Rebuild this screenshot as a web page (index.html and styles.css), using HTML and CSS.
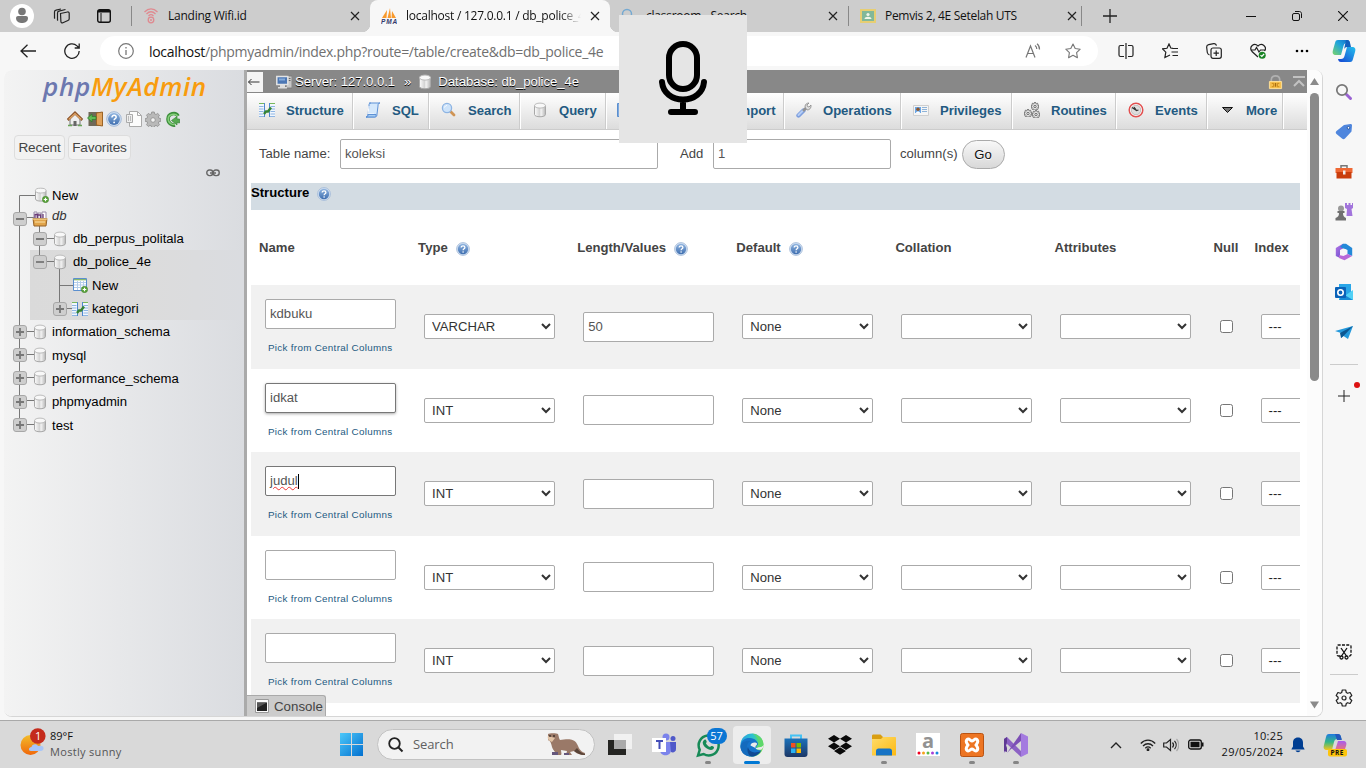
FILE: index.html
```html
<!DOCTYPE html>
<html lang="en">
<head>
<meta charset="utf-8">
<title>localhost / 127.0.0.1 / db_police_4e | phpMyAdmin</title>
<link rel="stylesheet" href="styles.css">
</head>
<body>
<svg class="sprite" aria-hidden="true">
  <defs>
    <linearGradient id="g-db" x1="0" x2="1" y1="0" y2="0"><stop offset="0" stop-color="#fdfdfd"/><stop offset=".45" stop-color="#d4d4d4"/><stop offset=".6" stop-color="#f3f3f3"/><stop offset="1" stop-color="#b5b5b5"/></linearGradient>
    <linearGradient id="g-help" x1="0" x2="0" y1="0" y2="1"><stop offset="0" stop-color="#8fb4e0"/><stop offset="1" stop-color="#3f6fb0"/></linearGradient>
    <linearGradient id="g-copilot" x1="1" x2="0" y1="0" y2="1"><stop offset="0" stop-color="#1468c8"/><stop offset=".45" stop-color="#1fa5dc"/><stop offset="1" stop-color="#7bd46a"/></linearGradient>
    <linearGradient id="g-copilot2" x1="1" x2="0" y1="0" y2="1"><stop offset="0" stop-color="#25c0ee"/><stop offset="1" stop-color="#1443d2"/></linearGradient>
    <linearGradient id="g-win" x1="0" x2="1" y1="0" y2="1"><stop offset="0" stop-color="#4cc8fa"/><stop offset="1" stop-color="#0370cf"/></linearGradient>
    <linearGradient id="g-sun" x1="0" x2="0" y1="0" y2="1"><stop offset="0" stop-color="#f3bd2b"/><stop offset="1" stop-color="#f0670a"/></linearGradient>
    <linearGradient id="g-edge" x1="0" x2="1" y1="0" y2=".4"><stop offset="0" stop-color="#2a9ae0"/><stop offset=".5" stop-color="#2cc3cf"/><stop offset="1" stop-color="#68dd55"/></linearGradient>
    <linearGradient id="g-folder" x1="0" x2="1" y1="0" y2="1"><stop offset="0" stop-color="#ffdc69"/><stop offset="1" stop-color="#fcb913"/></linearGradient>
    <linearGradient id="g-store" x1="0" x2="0" y1="0" y2="1"><stop offset="0" stop-color="#1b72bb"/><stop offset="1" stop-color="#1c3766"/></linearGradient>
    <linearGradient id="g-pre" x1="0" x2="0" y1="0" y2="1"><stop offset="0" stop-color="#1f7be0"/><stop offset=".5" stop-color="#33b787"/><stop offset="1" stop-color="#f4c51c"/></linearGradient>
    <linearGradient id="g-pre2" x1="0" x2="0" y1="0" y2="1"><stop offset="0" stop-color="#a85df0"/><stop offset="1" stop-color="#f77a5c"/></linearGradient>
    <linearGradient id="g-m365" x1="0" x2="1" y1="0" y2="1"><stop offset="0" stop-color="#b574e6"/><stop offset="1" stop-color="#5b4bc9"/></linearGradient>
  </defs>
  <symbol id="i-x" viewBox="0 0 10 10"><path d="M1 1l8 8M9 1L1 9" fill="none" stroke="#222" stroke-width="1.2"/></symbol>
  <symbol id="i-db" viewBox="0 0 16 16"><path d="M2.500 3.500v9c0 3 11 3 11 0v-9z" fill="url(#g-db)" stroke="#a8a8a8"/><ellipse cx="8" cy="3.600" rx="5.500" ry="2.500" fill="#f8f8f8" stroke="#bcbcbc"/></symbol>
  <symbol id="i-plus-badge" viewBox="0 0 8 8"><circle cx="4" cy="4" r="3.600" fill="#5ba53c" stroke="#3f7a28" stroke-width=".6"/><path d="M4 2v4M2 4h4" stroke="#fff" stroke-width="1.300"/></symbol>
  <symbol id="i-dbnew" viewBox="0 0 16 16"><path d="M2.500 3.500v8.500c0 2.800 10.500 2.800 10.500 0V3.500z" fill="url(#g-db)" stroke="#a8a8a8"/><ellipse cx="7.700" cy="3.600" rx="5.300" ry="2.400" fill="#f8f8f8" stroke="#bcbcbc"/><use href="#i-plus-badge" x="9" y="9" width="7" height="7"/></symbol>
  <symbol id="i-help" viewBox="0 0 14 14"><circle cx="7" cy="7" r="6.400" fill="#d3e1f2" stroke="#9db5d5" stroke-width=".8"/><circle cx="7" cy="7" r="5.200" fill="url(#g-help)"/><path d="M5.200 5.600c0-2.500 3.700-2.200 3.700-.2C8.900 6.800 7.100 6.600 7.100 8.200" fill="none" stroke="#fff" stroke-width="1.300"/><circle cx="7.100" cy="10" r=".8" fill="#fff"/></symbol>
  <symbol id="i-struct" viewBox="0 0 16 16"><path d="M0 1h5.500v14H0zM10.500 1H16v14h-5.500z" fill="#f2f7fd"/><path d="M5.500 1v14M10.500 1v14" stroke="#4f88cf" fill="none"/><path d="M0 1.500h5M11 1.500h5" stroke="#78b85c"/><path d="M0 4.500h4.500M0 7h4.500M0 9.500h4.500M0 12h4.500M0 14.500h5M11.500 4.500H16M11.500 7H16M11.500 9.500H16M11.500 12H16M11 14.500h5" stroke="#8eb5e3"/><path d="M5 12l2-2.500h2L12 5.500" fill="none" stroke="#358334" stroke-width="2.400"/></symbol>
  <symbol id="i-tblnew" viewBox="0 0 16 16"><path d="M1.500 1.500h13v12h-13z" fill="#fff" stroke="#5b8fce"/><path d="M2 2.700h12" stroke="#79b05f" stroke-width="1.200"/><path d="M5.500 4v9M8.500 4v9M11.500 4v9M2 5.500h12M2 8h12M2 10.500h12" stroke="#b3cdeb"/><use href="#i-plus-badge" x="9" y="9" width="7" height="7"/></symbol>
  <symbol id="i-sql" viewBox="0 0 16 16"><path d="M4 1h11c-2 0-2 1.500-2 3l-1 8c0 2-.5 3-2 3H1c1.500 0 2-1 2-3l1-8c0-2 0-3 2-3" fill="#d4e8fc" stroke="#5d91d6"/><path d="M4 4l-1 8h6" fill="none" stroke="#fff"/><path d="M1 15c2 0 2-1.500 2-2.500h8c0 1.500 0 2.500-1.500 2.500z" fill="#a6ccf2" stroke="#5d91d6"/></symbol>
  <symbol id="i-search" viewBox="0 0 16 16"><path d="M9.500 9.500l3.500 3.500" stroke="#cf9455" stroke-width="2.800" stroke-linecap="round"/><circle cx="6" cy="6" r="4.600" fill="#cde3fa" stroke="#8db4e3" stroke-width="1.300"/><path d="M3.500 5.500c.4-1.300 1.500-2 2.500-2" stroke="#fff" fill="none"/></symbol>
  <symbol id="i-wrench" viewBox="0 0 16 16"><path d="M2.500 13.500l5-5" stroke="#7d9ede" stroke-width="4.400" stroke-linecap="round"/><path d="M2.500 13l4.500-4.500" stroke="#b4cdf5" stroke-width="2" stroke-linecap="round"/><path d="M7 9l3-3" stroke="#929292" stroke-width="2.500"/><path d="M9 5c0-3 2-4 4-4l-2 2 .5 1.500L13 5l2-2c.5 3-1.500 5-4 5z" fill="#dedede" stroke="#888" stroke-width=".8"/></symbol>
  <symbol id="i-card" viewBox="0 0 16 16"><path d="M.5 3.500h15v10H.5z" fill="#f5f5f5" stroke="#cfcfcf"/><path d="M2 5h6v6H2z" fill="#6ba6e5"/><circle cx="5" cy="7.300" r="1.700" fill="#8e572d"/><path d="M3 11c0-2 4-2 4 0z" fill="#fff"/><path d="M9 5.500h5M9 7.500h5M9 9.500h5" stroke="#8eb3d8"/></symbol>
  <symbol id="i-gear-s" viewBox="0 0 16 16"><path d="M6.700 1h2.600l.4 2 1.300.5 1.700-1.100 1.800 1.800-1.100 1.700.5 1.300 2 .5v2.600l-2 .4-.5 1.300 1.100 1.700-1.800 1.800-1.700-1.100-1.300.5-.4 2H6.700l-.4-2-1.300-.5-1.700 1.100-1.800-1.800L2.600 12l-.5-1.300-2-.4V7.700l2-.5.5-1.300-1.100-1.700 1.800-1.800L5 3.500 6.300 3z"/><circle cx="8" cy="9" r="2.300" fill="#f3f3f3"/></symbol>
  <symbol id="i-routines" viewBox="0 0 16 16"><g fill="#e2e2e2" stroke="#4c4c4c" stroke-width="1.500"><use href="#i-gear-s" x="7" y="0" width="8" height="8"/><use href="#i-gear-s" x="0" y="7" width="8" height="8"/><use href="#i-gear-s" x="8" y="8" width="8" height="8"/></g></symbol>
  <symbol id="i-events" viewBox="0 0 16 16"><circle cx="8" cy="8" r="6.800" fill="#fff" stroke="#e25050" stroke-width="1.500"/><circle cx="8" cy="8" r="4.800" fill="#ddd" stroke="#aaa" stroke-width=".7"/><path d="M4 5.500l4.500 3M6 5l2.500 3.500 2-.5" fill="none" stroke="#333" stroke-width="1.200"/></symbol>
  <symbol id="i-lock" viewBox="0 0 16 16"><path d="M3.500 8V5.500c0-5.500 9-5.500 9 0V8" fill="none" stroke="#b0b0b0" stroke-width="1.800"/><path d="M1.500 7.500h13v7.500h-13z" fill="#f6bf4c" stroke="#ffe19a"/><path d="M4 9.500h2v3.500H4M12 9.500h-2v3.500h2" fill="none" stroke="#c98a1a"/><path d="M8 9v4" stroke="#a86e10" stroke-width="1.500"/></symbol>
  <symbol id="i-server" viewBox="0 0 16 16"><path d="M11 2h5v12h-6z" fill="#c6c6c6" stroke="#777" stroke-width=".8"/><path d="M12.500 4.500h2M12.500 6.500h2" stroke="#666"/><path d="M.8 2.500h11v8h-11z" fill="#4c77b4" stroke="#e3e3e3" stroke-width="1.500"/><path d="M3 4.500h6v2H3z" fill="#85abd9"/><path d="M4 11h5v2H4zM2 13h9v1.500H2z" fill="#ddd"/></symbol>
  <symbol id="i-home" viewBox="0 0 16 16"><path d="M3 8v6h10V8L8 3z" fill="#eee" stroke="#777"/><path d="M.7 9L8 2l7.300 7" fill="none" stroke="#8b532a" stroke-width="2.800"/><path d="M1.700 8.500L8 2.600l6.300 5.900" fill="none" stroke="#e0a566" stroke-width="1.400"/><path d="M6.500 10h3v5h-3z" fill="#666"/><path d="M1 14.500h4M11 14.500h4" stroke="#6aa457" stroke-width="1.600"/></symbol>
  <symbol id="i-door" viewBox="0 0 16 16"><path d="M1.500 1h13v14h-13z" fill="#6f6858"/><path d="M9.500 2l6-1v14l-6-1z" fill="#e0a25a" stroke="#9c6426"/><path d="M9 8.500H5V11L.5 7 5 3v2.500h4z" fill="#5fba55" stroke="#317f2f" stroke-width=".8"/></symbol>
  <symbol id="i-doc" viewBox="0 0 16 16"><path d="M3.500.5h8l4 4v11h-12z" fill="#fcfcfc" stroke="#aaa"/><path d="M11.500.5v4h4" fill="none" stroke="#aaa"/><path d="M.5 3.500h6v8h-6z" fill="#eee" stroke="#aaa"/><path d="M2.500 5v5M4.500 5v5" stroke="#bbb"/></symbol>
  <symbol id="i-reload" viewBox="0 0 16 16"><path d="M13 5C11 .8 3 2 3 8c0 5 5 6.500 7 6" fill="none" stroke="#3d8f3c" stroke-width="3.600"/><path d="M12.500 5C10.500 2 3.200 2.800 3.200 8c0 4.500 4.500 5.800 6.800 5.500" fill="none" stroke="#86cf7a" stroke-width="1.500"/><path d="M6.500 9.500l5.500-4v2.500h2.500v4l-2.500-.5v2.500z" fill="#55aa50" stroke="#3a8739" stroke-width=".7"/></symbol>
  <symbol id="i-box" viewBox="0 0 16 16"><path d="M2 1h3v7H2zM6 2h3v7H6zM10 1h4v7h-4z" fill="#fff" stroke="#988ba6"/><path d="M3 7V3.500h2.500V7M5.500 4h3v3M11 3v4" fill="none" stroke="#6a3b78" stroke-width="1.300"/><path d="M1 7.500h14l-1 7.500H2z" fill="#e1a44a" stroke="#966328"/><path d="M0 8h16M3 11h10" stroke="#fae1a7"/></symbol>
  <symbol id="i-minus" viewBox="0 0 14 14"><rect x=".5" y=".5" width="13" height="13" rx="2.500" fill="#cecece" stroke="#a7a7a7"/><path d="M3 7h8" stroke="#777" stroke-width="1.800"/></symbol>
  <symbol id="i-plus" viewBox="0 0 14 14"><rect x=".5" y=".5" width="13" height="13" rx="2.500" fill="#cecece" stroke="#a7a7a7"/><path d="M3 7h8M7 3v8" stroke="#777" stroke-width="1.800"/></symbol>
</svg>

<div class="browser">
  <header class="tabs">
    <svg class="profile" viewBox="0 0 24 24"><circle cx="12" cy="12" r="12" fill="#fff"/><circle cx="12" cy="7.500" r="3.800" fill="#777"/><path d="M6 14c0-1.300 1-2 2-2h8c1 0 2 .7 2 2 0 4-3.500 5-6 5s-6-1-6-5z" fill="#777"/></svg>
    <svg class="spaces" viewBox="0 0 18 16" fill="none" stroke="#222" stroke-width="1.200"><path d="M7.500 5.500l7-1.500c1-.2 1.700.3 1.700 1.200v5.500c0 1-.5 1.500-1.300 1.800l-5 2.200c-1 .5-2 0-2-1.200z"/><path d="M5 12.500l-.5-.5V5c0-1 .5-1.600 1.500-1.800L12.500 1.500M2 10.500L1.500 10V4c0-1 .5-1.600 1.500-1.800L8 1"/></svg>
    <svg class="tabmenu" viewBox="0 0 14 14"><rect x=".7" y=".7" width="12.600" height="12.600" rx="2" fill="none" stroke="#111" stroke-width="1.400"/><path d="M1 1h12v2.500H1z" fill="#111"/><path d="M4 4v9" stroke="#111"/></svg>
    <i class="sep"></i>
    <div class="tab tab-wifi">
      <svg class="fav" viewBox="0 0 16 16" fill="none" stroke="#df8a90" stroke-width="1.300"><path d="M1.500 4c4-4 9-4 13 0M3.500 6c3-3 6-3 9 0M5.500 8c2-2 3-2 5 0"/><circle cx="8" cy="12" r="2.800"/><path d="M7 12h2"/></svg>
      <span class="title">Landing Wifi.id</span><svg class="x"><use href="#i-x"/></svg>
    </div>
    <div class="tab tab-active">
      <svg class="fav" viewBox="0 0 16 16"><path d="M1 10L6 2l-.5 8zM6.500 10L9 0l1 10zM10.500 10L11 3l4 7z" fill="#f8992c"/><text x="0" y="15.500" class="pma" textLength="16">PMA</text></svg>
      <span class="title fade">localhost / 127.0.0.1 / db_police_4e</span><svg class="x"><use href="#i-x"/></svg>
    </div>
    <div class="tab tab-class">
      <svg class="fav" viewBox="0 0 16 16"><circle cx="6" cy="6" r="4.500" fill="none" stroke="#74a9d2" stroke-width="1.500"/><path d="M9 9l5 5" stroke="#74a9d2" stroke-width="2"/></svg>
      <span class="title">classroom - Search</span><svg class="x"><use href="#i-x"/></svg>
    </div>
    <i class="sep"></i>
    <div class="tab tab-pemvis">
      <svg class="fav" viewBox="0 0 16 14"><path d="M0 0h16v14H0z" fill="#e7ce72"/><path d="M2 2h12v10H2z" fill="#82b899"/><circle cx="8" cy="5.500" r="1.600" fill="#f2f5e9"/><path d="M4.500 10c0-3 7-3 7 0z" fill="#f2f5e9"/></svg>
      <span class="title">Pemvis 2, 4E Setelah UTS</span><svg class="x"><use href="#i-x"/></svg>
    </div>
    <i class="sep"></i>
    <svg class="newtab" viewBox="0 0 14 14"><path d="M7 0v14M0 7h14" stroke="#222" stroke-width="1.300"/></svg>
    <div class="winctl">
      <svg viewBox="0 0 10 10"><path d="M0 5.500h10" stroke="#111"/></svg>
      <svg viewBox="0 0 10 10" fill="none" stroke="#111"><rect x=".5" y="2.500" width="7" height="7" rx="1.500"/><path d="M3 .5h4.500c1 0 2 1 2 2V7"/></svg>
      <svg viewBox="0 0 10 10"><path d="M0 0l10 10M10 0L0 10" stroke="#111" stroke-width="1.200"/></svg>
    </div>
  </header>

  <div class="toolbar">
    <svg class="back" viewBox="0 0 16 14"><path d="M16 7H1M7.500.7L1 7l6.500 6.300" fill="none" stroke="#222" stroke-width="1.300"/></svg>
    <svg class="refresh" viewBox="0 0 16 16"><path d="M15.200 8A7.200 7.200 0 1 1 13 2.900L15 5M15.200.5V5h-4.500" fill="none" stroke="#222" stroke-width="1.300"/></svg>
    <div class="urlbar">
      <svg class="info" viewBox="0 0 16 16"><circle cx="8" cy="8" r="7.300" fill="none" stroke="#777" stroke-width="1.200"/><path d="M8 7v5M8 4v1.600" stroke="#777" stroke-width="1.300"/></svg>
      <span class="url"><b>localhost</b>/phpmyadmin/index.php?route=/table/create&amp;db=db_police_4e</span>
      <svg class="read" viewBox="0 0 16 16" fill="none" stroke="#777" stroke-width="1.200"><path d="M1 14.500L5.500 3 10 14.500M2.600 10.500h5.800M10 2.500c1.300.8 1.800 2 1.800 3.500M12 .8c2 1.500 2.600 3.500 2.500 5.700"/></svg>
      <svg class="star" viewBox="0 0 16 16" fill="none" stroke="#777" stroke-width="1.100"><path d="M8 1l2.200 4.500 5 .7-3.600 3.500.8 5L8 12.300l-4.400 2.400.8-5L.8 6.200l5-.7z" stroke-linejoin="round"/></svg>
    </div>
    <div class="tools">
      <svg viewBox="0 0 16 16" fill="none" stroke="#222" stroke-width="1.200"><path d="M6 2.500H2.500c-1 0-1.500.5-1.500 1.500v8c0 1 .5 1.500 1.500 1.500H6M10 2.500h3.500c1 0 1.500.5 1.500 1.500v8c0 1-.5 1.500-1.500 1.500H10M8 0v16"/></svg>
      <svg viewBox="0 0 16 16" fill="none" stroke="#222" stroke-width="1.200"><path d="M11 5.300l-2.200-.3L7 1 5 5.300l-4.500.6 3.300 3.300-.9 5.300L8 12M10.500 5.500H16M9.500 9H16M10.500 12.500H16"/></svg>
      <svg viewBox="0 0 16 16" fill="none" stroke="#222" stroke-width="1.200"><rect x="5" y="5" width="10.300" height="10.300" rx="2"/><path d="M10.200 7.500v5.400M7.500 10.200h5.400M3.500 12C2 11.500 1.500 10.500 1.300 9.500L.7 4.500C.5 3 1.200 2 2.700 1.700l5-1c1.300-.2 2.500.5 2.800 2"/></svg>
      <svg viewBox="0 0 16 16" fill="none" stroke="#222" stroke-width="1.200"><path d="M8 14L2 8.500C-1.500 4 4-1 8 3c4-4 9.500 1 6.500 5M1.500 7H5l1.500-2.500L9 9l1.500-2h4"/><circle cx="12.200" cy="12.200" r="3.500" fill="#188424" stroke="none"/><path d="M10.500 12.200l1.300 1.300 2.300-2.500" stroke="#fff"/></svg>
      <svg viewBox="0 0 16 16"><circle cx="3" cy="8" r="1.300"/><circle cx="8" cy="8" r="1.300"/><circle cx="13" cy="8" r="1.300"/></svg>
    </div>
    <svg class="copilot" viewBox="0 0 24 24"><path d="M6 1h9c2 0 2.500 1 3 3h-3c-2 0-3 1-3.500 3L9 16H4c-3 0-4-1.500-3-5L3 4c.5-2 1-3 3-3z" fill="url(#g-copilot)"/><path d="M18 23H9c-2 0-2.500-1-3-3h3c2 0 3-1 3.500-3L15 8h5c3 0 4 1.500 3 5l-2 7c-.5 2-1 3-3 3z" fill="url(#g-copilot2)"/><path d="M15 1c2 0 3 1 4 7h-4c-1.500 0-2.500 1-3 2.500L14 1z" fill="#1260bd"/></svg>
  </div>

  <div class="body">
    <div class="page">
      <aside class="nav">
        <div class="logo"><span>php</span>MyAdmin</div>
        <div class="navicons">
          <svg><use href="#i-home"/></svg><svg><use href="#i-door"/></svg><svg><use href="#i-help"/></svg><svg><use href="#i-doc"/></svg><svg fill="#b9b9b9" stroke="#8e8e8e" stroke-width=".8"><use href="#i-gear-s"/></svg><svg><use href="#i-reload"/></svg>
        </div>
        <div class="navbtns"><span>Recent</span><span>Favorites</span></div>
        <svg class="link" viewBox="0 0 14 8" fill="none" stroke="#666" stroke-width="1.400"><rect x=".8" y="1" width="6" height="5.600" rx="2.500"/><rect x="7.200" y="1" width="6" height="5.600" rx="2.500"/><path d="M4 4h6"/></svg>
        <div class="tree">
          <svg class="lines" viewBox="0 0 100 260" fill="none" stroke="#777"><path d="M34 12.500H15.500V238M20 34.500h12M35.500 40v36M40 55.500h14M40 78.500h14M55.500 86v38M56 102.500h13M62 125.500h10M20 148.500h14M20 171.500h14M20 194.500h14M20 217.500h14M20 241.500h14"/></svg>
          <div class="node top"><svg class="ic"><use href="#i-dbnew"/></svg><a>New</a></div>
          <div class="node group"><svg class="tg"><use href="#i-minus"/></svg><svg class="ic"><use href="#i-box"/></svg><a><em>db</em></a></div>
          <div class="node l1"><svg class="tg"><use href="#i-minus"/></svg><svg class="ic"><use href="#i-db"/></svg><a>db_perpus_politala</a></div>
          <div class="current">
            <div class="node l1"><svg class="tg"><use href="#i-minus"/></svg><svg class="ic"><use href="#i-db"/></svg><a>db_police_4e</a></div>
            <div class="node l2n"><svg class="ic"><use href="#i-tblnew"/></svg><a>New</a></div>
            <div class="node l2"><svg class="tg"><use href="#i-plus"/></svg><svg class="ic"><use href="#i-struct"/></svg><a>kategori</a></div>
          </div>
          <div class="node"><svg class="tg"><use href="#i-plus"/></svg><svg class="ic"><use href="#i-db"/></svg><a>information_schema</a></div>
          <div class="node"><svg class="tg"><use href="#i-plus"/></svg><svg class="ic"><use href="#i-db"/></svg><a>mysql</a></div>
          <div class="node"><svg class="tg"><use href="#i-plus"/></svg><svg class="ic"><use href="#i-db"/></svg><a>performance_schema</a></div>
          <div class="node"><svg class="tg"><use href="#i-plus"/></svg><svg class="ic"><use href="#i-db"/></svg><a>phpmyadmin</a></div>
          <div class="node"><svg class="tg"><use href="#i-plus"/></svg><svg class="ic"><use href="#i-db"/></svg><a>test</a></div>
        </div>
      </aside>
      <div class="resizer"></div>
      <main class="content">
        <div class="crumbs">
          <span class="collapse"><svg viewBox="0 0 12 8"><path d="M12 4H1M4 1L1 4l3 3" fill="none" stroke="#333"/></svg></span>
          <svg class="srv"><use href="#i-server"/></svg><span>Server: 127.0.0.1</span><span class="raquo">»</span>
          <svg class="dbi"><use href="#i-db"/></svg><span>Database: db_police_4e</span>
          <svg class="lock"><use href="#i-lock"/></svg>
          <svg class="gotop" viewBox="0 0 12 11"><path d="M0 1h12M1 10l5-5 5 5" fill="none" stroke="#c2c2c2" stroke-width="2"/></svg>
        </div>
        <nav class="menu">
          <a class="m1"><svg><use href="#i-struct"/></svg>Structure</a>
          <a class="m2"><svg><use href="#i-sql"/></svg>SQL</a>
          <a class="m3"><svg><use href="#i-search"/></svg>Search</a>
          <a class="m4"><svg><use href="#i-db"/></svg>Query</a>
          <a class="m5"><svg viewBox="0 0 16 16"><path d="M.5 1.500h11l3 3v10H.5z" fill="#7ea9df" stroke="#5b8fce"/></svg>Export</a>
          <a class="m6"><svg viewBox="0 0 16 16"><path d="M.5 1.500h11l3 3v10H.5z" fill="#7ea9df" stroke="#5b8fce"/></svg>Import</a>
          <a class="m7"><svg><use href="#i-wrench"/></svg>Operations</a>
          <a class="m8"><svg><use href="#i-card"/></svg>Privileges</a>
          <a class="m9"><svg><use href="#i-routines"/></svg>Routines</a>
          <a class="m10"><svg><use href="#i-events"/></svg>Events</a>
          <a class="m11"><svg viewBox="0 0 16 16"><path d="M3.500 5.500h10l-5 5z" fill="#777" stroke="#111"/></svg>More</a>
        </nav>
        <div class="form">
          <label>Table name:</label><div class="field f-name">koleksi</div>
          <label class="add">Add</label><div class="field f-add">1</div>
          <span class="cols">column(s)</span><button class="go">Go</button>
        </div>
        <div class="band">Structure <svg><use href="#i-help"/></svg></div>
        <div class="grid">
          <div class="row head"><div>Name</div><div>Type <svg><use href="#i-help"/></svg></div><div>Length/Values <svg><use href="#i-help"/></svg></div><div>Default <svg><use href="#i-help"/></svg></div><div>Collation</div><div>Attributes</div><div>Null</div><div>Index</div></div>
          <div class="row odd"><div class="name"><div class="field">kdbuku</div><a>Pick from Central Columns</a></div><div><select><option>VARCHAR</option></select></div><div><div class="field">50</div></div><div><select><option>None</option></select></div><div><select><option></option></select></div><div><select><option></option></select></div><div><input type="checkbox"></div><div><span class="idx">---</span></div></div>
          <div class="row"><div class="name"><div class="field hover">idkat</div><a>Pick from Central Columns</a></div><div><select><option>INT</option></select></div><div><div class="field"></div></div><div><select><option>None</option></select></div><div><select><option></option></select></div><div><select><option></option></select></div><div><input type="checkbox"></div><div><span class="idx">---</span></div></div>
          <div class="row odd"><div class="name"><div class="field focus"><span class="misspelt">judul</span><i class="caret"></i></div><a>Pick from Central Columns</a></div><div><select><option>INT</option></select></div><div><div class="field"></div></div><div><select><option>None</option></select></div><div><select><option></option></select></div><div><select><option></option></select></div><div><input type="checkbox"></div><div><span class="idx">---</span></div></div>
          <div class="row"><div class="name"><div class="field"></div><a>Pick from Central Columns</a></div><div><select><option>INT</option></select></div><div><div class="field"></div></div><div><select><option>None</option></select></div><div><select><option></option></select></div><div><select><option></option></select></div><div><input type="checkbox"></div><div><span class="idx">---</span></div></div>
          <div class="row odd"><div class="name"><div class="field"></div><a>Pick from Central Columns</a></div><div><select><option>INT</option></select></div><div><div class="field"></div></div><div><select><option>None</option></select></div><div><select><option></option></select></div><div><select><option></option></select></div><div><input type="checkbox"></div><div><span class="idx">---</span></div></div>
        </div>
        <div class="console"><svg viewBox="0 0 14 14"><path d="M.5.5h13v13H.5z" fill="#fafafa" stroke="#999"/><path d="M2 3.500h10V12H2z" fill="#222"/><path d="M2 3.500h10L2 9z" fill="#555"/></svg>Console</div>
      </main>
      <div class="scroll">
        <svg viewBox="0 0 9 8"><path d="M4.500 1L9 8H0z" fill="#8a8a8a"/></svg>
        <i></i>
        <svg class="down" viewBox="0 0 9 8"><path d="M4.500 7.500L9 .5H0z" fill="#8a8a8a"/></svg>
      </div>
    </div>
    <aside class="edgebar">
      <svg viewBox="0 0 18 18"><path d="M11.500 11.500l4 4" stroke="#9a62d2" stroke-width="3" stroke-linecap="round"/><circle cx="7" cy="7" r="5.200" fill="#f7f7f7" stroke="#777" stroke-width="1.700"/></svg>
      <svg viewBox="0 0 18 18"><path d="M9 2l6.500-1c1 0 1.500.5 1.500 1.500l-.5 6-6.500 7c-1 1-2 1-3 0L1.500 11c-1-1-1-2 0-3z" fill="#4f86dd"/><circle cx="13.500" cy="4.800" r="1.300" fill="#fff" stroke="#2858a5"/></svg>
      <svg viewBox="0 0 18 18"><path d="M6 5V2.800h6V5" fill="none" stroke="#777" stroke-width="1.500"/><path d="M.5 5h17v5h-17z" fill="#ef6834"/><path d="M1.500 9h15v6.500h-15z" fill="#c93d0c"/><path d="M8 7.500h2.500v4H8z" fill="#eee"/></svg>
      <svg viewBox="0 0 18 18"><circle cx="6" cy="5.500" r="3" fill="#999"/><path d="M2.500 8h7v2H8c0 3 1 4 3 5v2.500H.5V15C3 14 4 13 4 10H2.500z" fill="#707070"/><path d="M10 0h2v2h1.500V0h2v2H17V0h1v5l-1.500 1 1 7h-6L12 6l-2-1z" fill="#a274dc"/></svg>
      <svg viewBox="0 0 18 18"><path d="M8 .8L4 3 .8 5v8L5 15V7l7-3.500z" fill="url(#g-m365)"/><path d="M8 .8h3L17.200 5v8L12.500 11V7L5 4z" fill="#2389d8"/><path d="M17.200 13L9.500 17.300 4 15v-3l4.500 1 4-2z" fill="#b869d8"/><circle cx="9" cy="9" r="3" fill="#f7f7f7"/></svg>
      <svg viewBox="0 0 18 18"><path d="M4 1h12v12H4z" fill="#29a6e8"/><path d="M4 8l7 4 7-5v10H4z" fill="#50d0f5"/><path d="M4 17h14L8 11z" fill="#178bd6"/><rect x="0" y="4" width="11" height="11" rx="1" fill="#0a62b8"/><circle cx="5.500" cy="9.500" r="2.700" fill="none" stroke="#fff" stroke-width="1.600"/></svg>
      <svg viewBox="0 0 18 18"><path d="M0 8l18-5-5 13-4.500-3L6 15v-5z" fill="#2499dc"/><path d="M5 10l13-7-9.500 10L6 15z" fill="#0c5691"/></svg>
      <hr>
      <span class="plus"><svg viewBox="0 0 12 12"><path d="M6 0v12M0 6h12" stroke="#222"/></svg><i></i></span>
      <svg class="snip" viewBox="0 0 16 16" fill="none" stroke="#111" stroke-width="1.300"><path d="M4 12H2.500C1.500 12 1 11.500 1 10.500v-8C1 1.500 1.500 1 2.500 1h11c1 0 1.500.5 1.500 1.500v8c0 1-.5 1.500-1.500 1.500H12" stroke-dasharray="3 1.300"/><path d="M5 4l5.500 8M11 4l-5.500 8"/><circle cx="5.500" cy="13.500" r="1.500"/><circle cx="10.500" cy="13.500" r="1.500"/></svg>
      <hr class="low">
      <svg class="cog" viewBox="0 0 18 18" fill="none" stroke="#222" stroke-width="1.200"><path d="M7.300 1h3.400l.6 2.500 1.300.8 2.500-.8 1.700 3-1.900 1.800v1.500l1.900 1.700-1.700 3-2.500-.8-1.300.8-.6 2.500H7.300l-.6-2.500-1.300-.8-2.500.8-1.700-3 1.900-1.700V8.300L1.200 6.500l1.700-3 2.500.8 1.300-.8z" stroke-linejoin="round"/><circle cx="9" cy="9" r="2"/></svg>
    </aside>
  </div>

  <footer class="taskbar">
    <div class="weather">
      <svg viewBox="0 0 26 28"><circle cx="10.500" cy="17" r="10" fill="url(#g-sun)"/><path d="M11 23c-3 0-2.500-4 .5-4 .5-3.500 5.500-3.500 6.500-1 3-.5 6 0 5.500 2.500 0 1.500-1 2.500-3 2.500z" fill="#a7c5f8"/><circle cx="17.800" cy="8" r="7.800" fill="#c42b1c"/><text x="15" y="12" class="badge-t">1</text></svg>
      <p><b>89°F</b><span>Mostly sunny</span></p>
    </div>
    <svg class="start" viewBox="0 0 23 23"><path d="M0 0h11v11H0zM12 0h11v11H12zM0 12h11v11H0zM12 12h11v11H12z" fill="url(#g-win)"/></svg>
    <div class="tsearch">
      <svg class="mag" viewBox="0 0 16 16"><circle cx="6.500" cy="6.500" r="5.300" fill="none" stroke="#222" stroke-width="1.800"/><path d="M10.500 10.500l4 4" stroke="#222" stroke-width="2"/></svg>
      <span>Search</span>
      <svg class="otter" viewBox="0 0 40 23"><path d="M2 1c1-1 9-1 10 0 1 3 1 5 2 6 5 0 13-3 17 4 2 3 2 7 8 9v2c-6 0-9-2-11-4l-4 1 2 3h-6l1-4-6-1c0 2 1 4 0 5H9c2-3-2-4-3-8C5 9 4 8 2 7z" fill="#9a7968"/><path d="M2 3c-1 3 1 5 4 6l3-4z" fill="#e1c3a6"/><path d="M28 18c3 2 6 4 11 4v-1c-4-1-6-3-8-6z" fill="#594438"/><circle cx="4" cy="3" r=".8"/><circle cx="8" cy="3" r=".8"/><path d="M6 19h6v3H6zM18 20h5v2h-5z" fill="#65577c"/></svg>
    </div>
    <div class="apps">
      <span><svg viewBox="0 0 24 24"><path d="M0 7h18v15H0z" fill="#252522"/><path d="M6 1h18v15H6z" fill="#f3f3f3" opacity=".9"/><path d="M6 7h12v9H6z" fill="#aaa"/></svg></span>
      <span><svg viewBox="0 0 24 24"><circle cx="14" cy="4" r="3.500" fill="#7b83eb"/><circle cx="21" cy="5.500" r="2.500" fill="#5059c9"/><path d="M8 9h11v8c0 7-11 7-11 0z" fill="#7b83eb"/><path d="M18 9h6v7c0 3-3 4-5 3z" fill="#5059c9"/><path d="M0 5h14v14H0z" fill="#fff"/><path d="M4 8h7M7.500 8v8" stroke="#444eb8" stroke-width="2"/></svg></span>
      <span class="run"><svg viewBox="0 0 24 24"><path d="M2 22.500l1.700-5.700A10 10 0 1 1 7.600 21z" fill="none" stroke="#178a57" stroke-width="2.500"/><path d="M8 7c1-1 2-.5 2.500 1 .5 1.200 0 1.600-.6 2.300 1 2 2.300 3 4.200 3.800.8-1 1.200-1.500 2.200-1 1.700.8 2 1 1.500 2.200-.8 2-3.300 2-5.500 1C9 15 7 12.500 6.700 10c0-1 .5-2.200 1.300-3z" fill="#178a57"/></svg><em>57</em></span>
      <span class="on"><svg viewBox="0 0 24 24"><circle cx="12" cy="12" r="11.500" fill="url(#g-edge)"/><path d="M.5 13C1 7 6 4.500 10 5c5 0 8 4 8 6 0 1.500-2 2-2 4 0 1.500 2 3 5 2-2 4-5 6.500-9 6.500C5.500 23.500.5 19 .5 13z" fill="#1674cb"/><path d="M7 14c0-3 1-5 4-6-5-1-10 1-10.500 6 .5 6 5 9.500 10 9.500C8 21 7 18 7 14z" fill="#146bbd"/><path d="M8 14c1 5 6 7 13 4-2 3.500-6 5.500-10 5.500-3-2-4.500-6-3-9.500z" fill="#104a93"/><path d="M10.500 12.500c0-3 5-4 6.500-2 .5 1.500-2 2-1.500 4.500.5 1.500 3 2 6 1.500 1.500-1 2-3 2-5-1 2-3 2.500-5 2.500-1 1-2 1-3 1z" fill="#eaeaea"/><path d="M17 14c3 .5 6 0 6.500-2.500C23 6 18 1 12 .5c6 3 8 8 5 13.500z" fill="#5fd86b"/></svg></span>
      <span><svg viewBox="0 0 24 24"><path d="M7 7V2.500h10V7" fill="none" stroke="#44c2f4" stroke-width="2"/><path d="M.5 5.500h23V21c0 2-1 3-3 3h-17c-2 0-3-1-3-3z" fill="url(#g-store)"/><path d="M7 10h4.500v4.500H7z" fill="#f25022"/><path d="M12.500 10H17v4.500h-4.500z" fill="#7fba00"/><path d="M7 15.500h4.500V20H7z" fill="#29b2f3"/><path d="M12.500 15.500H17V20h-4.500z" fill="#ffb900"/></svg></span>
      <span><svg viewBox="0 0 24 24"><path d="M6 2l6 3.700L6 9.500 0 5.700zM18 2l6 3.700-6 3.800-6-3.800zM6 9.500l6 3.700L6 17l-6-3.800zM18 9.500l6 3.700-6 3.800-6-3.800zM6 18l6-3.700 6 3.700-6 3.800z" fill="#0a0a0a"/></svg></span>
      <span class="run"><svg viewBox="0 0 24 24"><path d="M0 3c0-1 .5-1.500 1.500-1.500h7L11 4h12v6H0z" fill="#d99e12"/><path d="M0 6h9l2-2h12c.7 0 1 .5 1 1v17.500H0z" fill="url(#g-folder)"/><path d="M4 22.500V18c0-1.500 1-2.500 2.500-2.500h11c1.500 0 2.500 1 2.500 2.500v4.500z" fill="#1673c5"/></svg></span>
      <span><svg viewBox="0 0 24 24"><path d="M0 0h24v23H0z" fill="#fff"/><text x="6" y="15" class="amz">a</text><circle cx="3" cy="20" r="1.500" fill="#f00020"/><circle cx="7.500" cy="20" r="1.500" fill="#f5a21b"/><circle cx="12" cy="20" r="1.500" fill="#57b947"/><circle cx="16.500" cy="20" r="1.500" fill="#a740d6"/><circle cx="21" cy="20" r="1.500" fill="#1788e0"/></svg></span>
      <span class="run"><svg viewBox="0 0 24 24"><rect x=".5" y=".5" width="23" height="23" rx="2" fill="#ed7523" stroke="#b95313"/><path d="M7 6.500c2-2 3.500 1.500 5 1.500s3-3.500 5-1.500 0 4-1 5.500c1 1.500 3 3.500 1 5.500s-3.500-1.500-5-1.500-3 3.500-5 1.500 0-4 1-5.500C7 10.500 5 8.500 7 6.500z" fill="none" stroke="#fff" stroke-width="3"/></svg></span>
      <span class="run"><svg viewBox="0 0 24 24"><path d="M0 6l3-2 14 14v6L3 11 1 13v7l-1-2z" fill="#8c62c4"/><path d="M0 18V6l3-2v5l-1 3 1 3v4z" fill="#5f3a94"/><path d="M3 20L17 0v8L7 16z" fill="#7c4fb5"/><path d="M17 0l7 3.500v17L17 24z" fill="#a47be0"/></svg></span>
    </div>
    <div class="tray">
      <svg class="up" viewBox="0 0 12 8"><path d="M1 7l5-5 5 5" fill="none" stroke="#222" stroke-width="1.400"/></svg>
      <svg class="wifi" viewBox="0 0 16 12" fill="none" stroke="#222" stroke-width="1.300"><path d="M.8 4.500c4-4.500 10.400-4.500 14.400 0M3 7c3-3 7-3 10 0M5.300 9.200c1.700-1.600 3.700-1.600 5.400 0"/><circle cx="8" cy="10.800" r=".8" fill="#222"/></svg>
      <svg class="vol" viewBox="0 0 16 14" fill="none" stroke="#222" stroke-width="1.200"><path d="M.7 5v4h2.800L7.500 12.500v-11L3.500 5zM9.500 4.500c1.300 1.500 1.300 3.500 0 5M11.500 2.800c2.200 2.500 2.200 6 0 8.400"/><path d="M13.500 1c3 3.500 3 8.500 0 12" stroke="#aaa"/></svg>
      <svg class="bat" viewBox="0 0 16 11"><rect x=".7" y="1" width="12.600" height="9" rx="2" fill="none" stroke="#111" stroke-width="1.300"/><path d="M2.500 2.800h9v5.400h-9zM14 3.500h1.500v4H14z" fill="#111"/></svg>
      <p><span>10:25</span><span>29/05/2024</span></p>
      <svg class="bell" viewBox="0 0 14 16"><path d="M7 .5c3.500 0 5 2.500 5 5v4l1.500 2.500v.5H.5V12L2 9.500v-4c0-2.500 1.500-5 5-5zM4.500 13.500h5c-1 2.300-4 2.300-5 0z" fill="#003e92"/></svg>
      <svg class="pre" viewBox="0 0 24 24"><path d="M6 1h9c2 0 2.500 1 3 3l.5 2h-4c-2 0-3 1-3.500 3l-2 8H4c-3 0-4-1.500-3-5L3 4c.5-2 1-3 3-3z" fill="url(#g-pre)"/><path d="M15 8h5c3 0 4 1.500 3 5l-2 6H8c3 0 4-1 4.500-3z" fill="url(#g-pre2)"/><path d="M15 1c3 0 3 4 4 6h-5l-2-6z" fill="#2358bd"/><rect x="5" y="16" width="19" height="7.500" rx="2" fill="#fdc40c"/><text x="7.500" y="22.300" class="pret" textLength="13">PRE</text></svg>
    </div>
  </footer>
</div>

<div class="mic"><svg viewBox="0 0 128 128" fill="none" stroke="#000" stroke-width="6" stroke-linecap="round"><rect x="50" y="29" width="28" height="45" rx="14"/><path d="M43 67c1 11 10 17.500 21 17.500S84 78 85 67M64 85v12M52 97h24"/></svg></div>
</body>
</html>
```
FILE: styles.css
```css
* { box-sizing: border-box; }
body { margin: 0; width: 1366px; height: 768px; overflow: hidden; background: #f7f7f7; font-family: "Liberation Sans", Arial, sans-serif; font-size: 13.12px; color: #444; }
svg { display: block; flex: none; width: 16px; height: 16px; }
p { margin: 0; }
.sprite { position: absolute; width: 0; height: 0; }
.browser { display: flex; flex-direction: column; height: 768px; }

/* tab strip */
.tabs { display: flex; align-items: center; height: 32px; background: #cdcdcd; font-family: "Open Sans", "Noto Sans", sans-serif; font-size: 12px; letter-spacing: -0.25px; color: #111; flex: none; }
.profile { width: 24px; height: 24px; margin-left: 10px; }
.spaces { width: 18px; margin-left: 19px; }
.tabmenu { width: 14px; height: 14px; margin-left: 26px; }
.sep { width: 1px; height: 20px; background: #888; flex: none; }
.tabmenu + .sep { margin-left: 20px; }
.tab { display: flex; align-items: center; height: 32px; flex: none; }
.tab .title { margin-left: 9px; flex: 1; white-space: nowrap; overflow: hidden; line-height: 20px; }
.tab .x { width: 10px; height: 10px; }
.tab-wifi { width: 238px; padding: 0 10px 0 11px; }
.tab-active { position: relative; width: 240px; padding: 0 10px 0 11px; background: #f7f7f7; border-radius: 8px 8px 0 0; }
.tab-active::before, .tab-active::after { content: ""; position: absolute; bottom: 0; width: 8px; height: 8px; }
.tab-active::before { left: -8px; background: radial-gradient(circle at 0 0, #cdcdcd 8px, #f7f7f7 8.500px); }
.tab-active::after { right: -8px; background: radial-gradient(circle at 100% 0, #cdcdcd 8px, #f7f7f7 8.500px); }
.fade { margin-right: 9px; -webkit-mask-image: linear-gradient(90deg, #000 88%, transparent); mask-image: linear-gradient(90deg, #000 88%, transparent); }
.tab-class { width: 238px; padding: 0 10px 0 11px; }
.tab-pemvis { width: 232px; padding: 0 4px 0 11px; }
.tab-pemvis .title { letter-spacing: -0.3px; }
.tab-pemvis .fav { height: 14px; }
.newtab { width: 14px; height: 14px; margin-left: 21px; }
.winctl { display: flex; gap: 36px; margin-left: auto; margin-right: 18px; }
.winctl svg { width: 10px; height: 10px; }
.pma { font: italic bold 6.500px "Liberation Sans"; fill: #333a6c; }

/* address row */
.toolbar { display: flex; align-items: center; height: 38px; flex: none; }
.back { width: 16px; height: 14px; margin-left: 20px; }
.refresh { margin-left: 28px; }
.urlbar { display: flex; align-items: center; width: 998px; height: 30px; margin-left: 20px; padding: 0 18px; background: #fff; border-radius: 15px; }
.url { margin-left: 15px; font: 14px "Open Sans", "Noto Sans", sans-serif; letter-spacing: -0.3px; color: #707070; white-space: nowrap; }
.url b { font-weight: 400; color: #111; }
.read { margin-left: auto; margin-right: 24px; }
.star { margin-right: -1px; }
.tools { display: flex; gap: 28px; margin-left: 20px; }
.copilot { width: 24px; height: 24px; margin-left: 22px; }

/* page frame */
.body { display: flex; height: 650px; flex: none; }
.page { display: flex; width: 1319px; height: 647px; margin-left: 4px; border: solid #d6d6d6; border-width: 0 1px 1px 0; border-radius: 8px; overflow: hidden; background: #fff; }
.nav { width: 240px; flex: none; background: linear-gradient(90deg, #f3f3f3, #dadce0); color: #000; }
.resizer { width: 3px; flex: none; background: #aaa; }
.logo { margin: 0 0 0 39px; width: 190px; height: 34px; font: italic 600 26px/33px "Open Sans", "Noto Sans", sans-serif; letter-spacing: 0.65px; color: #f89c0e; white-space: nowrap; }
.logo span { color: #6c78af; }
.navicons { display: flex; gap: 3.600px; margin: 7px 0 0 63px; }
.navbtns { display: flex; gap: 3px; margin: 8px 0 0 10px; font-size: 13.600px; color: #444; }
.navbtns span { width: 51px; height: 25px; line-height: 23px; text-align: center; border: 1px solid #ddd; border-radius: 4px; background: #f2f2f2; white-space: nowrap; letter-spacing: -0.15px; }
.navbtns span + span { width: 63px; }
.link { width: 14px; height: 8px; margin: 9px 0 0 202px; }
.tree { position: relative; margin-top: 6px; }
.lines { position: absolute; left: 0; top: 0; width: 100px; height: 260px; }
.node { position: relative; display: flex; align-items: center; height: 23.300px; padding-left: 9px; white-space: nowrap; }
.node .tg { width: 14px; height: 14px; }
.node .ic { margin-left: 5px; }
.node a { margin-left: 4px; }
.node em { color: #333; }
.node.top { padding-left: 24px; height: 24px; }
.node.top a { margin-left: 3px; }
.node.group { height: 20px; }
.node.group svg { margin-top: 3px; }
.node.group a { margin-bottom: 4px; }
.node.l1 { padding-left: 29px; }
.node.l1 a { margin-left: 5px; }
.node.l2n { padding-left: 63px; }
.node.l2 { padding-left: 49px; }
.current { background: linear-gradient(90deg, transparent 26px, #dadada 26px, #dcdcdc 60%, #dadce0); }

/* content column */
.content { position: relative; width: 1060px; flex: none; background: #fff; }
.crumbs { display: flex; align-items: center; height: 23px; background: #888; color: #fff; text-shadow: 0 1px 0 #000; letter-spacing: -0.03px; white-space: nowrap; }
.collapse { display: flex; align-items: center; width: 16px; height: 20px; background: #f4f4f4; }
.collapse svg { width: 13px; height: 8px; }
.srv { margin: 0 3px 0 13px; }
.raquo { margin: 0 6px 0 9px; }
.dbi { margin-right: 5px; }
.lock { width: 15px; margin-left: auto; margin-right: 10px; }
.gotop { width: 12px; height: 11px; margin-right: 2px; }
.menu { display: flex; height: 37px; background: linear-gradient(#fff, #dcdcdc); border-bottom: 1px solid #ccc; }
.menu a { display: flex; align-items: center; padding: 0 0 2px 12px; border-right: 1px solid #ccc; box-shadow: 1px 0 0 #fff; font-weight: 700; letter-spacing: -0.05px; color: #235a81; white-space: nowrap; overflow: hidden; }
.menu svg { margin-right: 11px; }
.menu .m5 { padding-left: 11px; }
.m1 { width: 106px; } .m2 { width: 76px; } .m3 { width: 91px; } .m4 { width: 86px; } .m5 { width: 90px; } .m6 { width: 88px; }
.m7 { width: 117px; } .m8 { width: 111px; } .m9 { width: 104px; } .m10 { width: 91px; } .m11 { width: 76px; }
.form { display: flex; align-items: center; height: 53px; padding: 0 0 5px 12px; white-space: nowrap; }
.form label { width: 81px; margin-top: -2px; }
.form .add { width: 33px; margin-left: 22px; }
.field { height: 30px; padding-left: 4px; border: 1px solid #aaa; border-radius: 2px; background: #fff; line-height: 28px; color: #555; }
.f-name { width: 318px; }
.f-add { width: 178px; }
.cols { margin: -2px 4px 0 9px; }
.go { width: 43px; height: 29px; margin-top: 1px; padding: 0; border: 1px solid #aaa; border-radius: 15px; background: linear-gradient(#f8f8f8, #d8d8d8); font: 13.120px "Liberation Sans", Arial, sans-serif; color: #111; text-shadow: 0 1px 0 #fff; }
.band { display: flex; width: 1049px; height: 27px; margin-left: 4px; background: #d3dce3; color: #000; font-weight: 700; line-height: 20px; }
.band svg { width: 14px; height: 14px; margin: 4px 0 0 8px; }
.grid { width: 1049px; margin-left: 4px; overflow: hidden; }
.row { display: grid; grid-template-columns: repeat(6, 159.100px) 41px 1fr; height: 83.500px; align-items: center; white-space: nowrap; }
.row > div { padding-left: 14px; }
.row.odd { background: #f1f1f1; }
.row.head { height: 75px; font-weight: 700; }
.row.head > div { display: flex; align-items: center; padding-left: 8px; height: 16px; }
.head svg { width: 14px; height: 14px; margin: 3px 0 0 8px; }
.row .field { width: 131px; }
.row .name { padding-top: 1px; }
.name a { display: block; margin: 12px 0 0 3px; height: 14px; line-height: 14px; font-size: 9.840px; letter-spacing: 0.3px; color: #235a81; }
.field.hover { border-color: #777; box-shadow: 0 1px 3px #aaa; }
.field.focus { display: flex; align-items: center; border-color: #777; }
.misspelt { text-decoration: underline wavy #e33 1px; text-underline-offset: 1px; line-height: 18px; }
.caret { width: 1px; height: 15px; background: #000; }
select { display: block; width: 131px; height: 25px; padding: 0 3px; border: 1px solid #aaa; border-radius: 2px; background: #fff; font: 13.120px "Liberation Sans", Arial, sans-serif; color: #333; }
input[type=checkbox] { display: block; width: 13px; height: 13px; margin: 0; }
.idx { display: block; width: 60px; height: 25px; padding-left: 7px; line-height: 23px; border: 1px solid #aaa; border-radius: 2px; background: #fff; color: #222; }
.console { position: absolute; left: 0; bottom: 0; display: flex; align-items: center; width: 79px; height: 21px; border: 1px solid #aaa; border-left: 0; border-bottom: 0; border-radius: 0 3px 0 0; background: #ccc; color: #444; font-size: 13.300px; }
.console svg { width: 14px; height: 14px; margin: 0 5px 0 8px; }
.scroll { display: flex; flex-direction: column; align-items: center; flex: 1; background: #fcfcfc; }
.scroll svg { width: 9px; height: 8px; margin-top: 7px; }
.scroll i { width: 9px; height: 288px; margin-top: 8px; border-radius: 5px; background: #8a8a8a; }
.scroll .down { margin-top: auto; margin-bottom: 7px; }

.edgebar { display: flex; flex-direction: column; align-items: center; width: 42px; padding-top: 13px; }
.edgebar > svg { width: 18px; height: 18px; margin-bottom: 22px; }
.edgebar hr { width: 28px; margin: 1px 0 25px; border: 0; border-top: 1px solid #ccc; }
.plus { position: relative; }
.plus svg { width: 12px; height: 12px; }
.plus i { position: absolute; left: 16px; top: -8px; width: 6px; height: 6px; border-radius: 3px; background: #d11; }
.edgebar .snip { width: 16px; height: 16px; margin: auto 0 14px; }
.edgebar .low { margin: 0 0 14px; }
.edgebar .cog { margin-bottom: 13px; }

/* taskbar */
.taskbar { display: flex; align-items: center; height: 48px; flex: none; border-top: 1px solid #a9a9a9; background: #d9d9d9; font-family: "Open Sans", "Noto Sans", sans-serif; }
.weather { display: flex; width: 320px; margin-left: 20px; }
.weather svg { width: 26px; height: 28px; margin-top: -2px; }
.weather p { margin: -2px 0 0 4px; font-size: 11px; line-height: 16px; white-space: nowrap; }
.weather b { display: block; font-weight: 400; color: #111; }
.weather span { color: #555; letter-spacing: 0.32px; }
.badge-t { font: 11px "Open Sans"; fill: #fff; }
.start { width: 23px; height: 23px; }
.tsearch { display: flex; align-items: center; width: 218px; height: 31px; margin-left: 14px; padding: 0 8px 0 10px; border: 1px solid #c2c2c2; border-radius: 16px; background: #f2f2f2; font-size: 13px; letter-spacing: -0.1px; color: #606060; }
.tsearch span { margin: -2px 0 0 9px; }
.otter { width: 40px; height: 23px; margin-left: auto; }
.apps { display: flex; margin-left: 5.500px; gap: 6px; }
.apps span { position: relative; display: flex; align-items: center; justify-content: center; width: 38px; height: 38px; }
.apps span > svg { width: 24px; height: 24px; overflow: visible; }
.apps .on { background: #ededed; border-radius: 4px; }
.run::after, .on::after { content: ""; position: absolute; bottom: 0; left: 16px; width: 6px; height: 3px; border-radius: 2px; background: #858585; }
.on::after { left: 11px; width: 16px; background: #0078d4; }
.apps em { position: absolute; left: 18px; top: 2px; width: 20px; height: 16px; border-radius: 8px; background: #0a76d4; color: #fff; font: 11px/16px "Open Sans"; text-align: center; }
.amz { font: bold 20px "Open Sans"; fill: #929292; }
.tray { display: flex; align-items: center; margin-left: auto; margin-right: 19px; }
.up { width: 12px; height: 8px; margin-right: 18px; }
.wifi { height: 12px; margin-right: 7px; }
.vol { height: 14px; margin-right: 9px; }
.bat { height: 11px; }
.tray p { width: 79px; margin-top: -2px; text-align: right; font-size: 11px; line-height: 16px; letter-spacing: 0.3px; color: #111; }
.tray p span { display: block; }
.bell { width: 14px; height: 16px; margin-left: 8px; }
.pre { width: 24px; height: 24px; margin-left: 18px; }
.pret { font: bold 6.500px "Open Sans"; fill: #111; }

.mic { position: absolute; left: 619px; top: 15px; width: 128px; height: 128px; background: #e5e5e5; }
.mic svg { width: 128px; height: 128px; }
```
